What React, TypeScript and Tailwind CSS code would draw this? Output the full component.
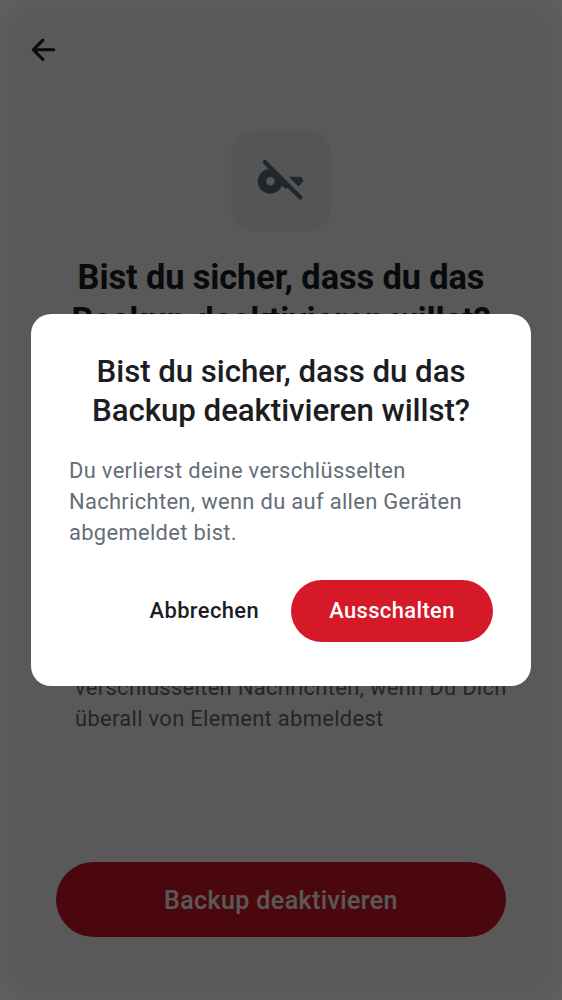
import React from "react";

function BackArrow() {
  return (
    <svg width="35" height="35" viewBox="0 0 24 24" fill="none" aria-hidden="true">
      <path
        d="M19 12.2H5M11.6 5.6 5 12.2l6.6 6.6"
        stroke="#1b1d22"
        strokeWidth="2.1"
        strokeLinecap="round"
        strokeLinejoin="round"
      />
    </svg>
  );
}

function KeyOffIcon() {
  return (
    <svg width="50" height="50" viewBox="0 0 50 50" aria-hidden="true">
      <path
        fillRule="evenodd"
        d="M15.5 12.8A12.5 12.5 0 1 0 26 29.6L29.2 32.8 31.2 32 33.2 33.4 36 33.4ZM10.2 25.2A4.2 4.2 0 1 1 18.6 25.2 4.2 4.2 0 1 1 10.2 25.2Z"
        fill="#656d77"
      />
      <path d="M32.6 20.8H44.2Q45 20.8 45.5 21.5L47 24.1Q47.5 25 46.9 25.8L42.4 30.6Z" fill="#656d77" />
      <path d="M8.8 6 44.4 41.6" stroke="#656d77" strokeWidth="4.2" strokeLinecap="round" />
    </svg>
  );
}

function Page() {
  return (
    <main className="flex h-full flex-col bg-white">
      <header className="flex h-[100px] items-center pb-px pl-[26px]">
        <button aria-label="Zurück">
          <BackArrow />
        </button>
      </header>
      <div className="mt-[31px] flex size-[100px] items-center justify-center self-center rounded-[22px] bg-[#f0f2f5]">
        <KeyOffIcon />
      </div>
      <h1 className="mt-[25px] text-center text-[34.4px] leading-[43px] font-bold tracking-[-0.11px] whitespace-nowrap text-[#1b1d22]">
        Bist du sicher, dass du das
        <br />
        Backup deaktivieren willst?
      </h1>
      <p className="mt-[330px] pl-[75px] text-[21.9px] leading-[31.25px] tracking-[0.33px] whitespace-nowrap text-[#656d77]">
        verschlüsselten Nachrichten, wenn Du Dich
        <br />
        überall von Element abmeldest
      </p>
      <button className="mx-14 mt-auto mb-[62.6px] h-[75px] shrink-0 rounded-full bg-[#d51928] pt-px text-[25px] font-medium tracking-[0.4px] text-white">
        Backup deaktivieren
      </button>
    </main>
  );
}

function ConfirmDialog() {
  return (
    <section
      role="dialog"
      className="flex h-[372px] w-[500px] flex-col rounded-[20px] bg-white px-[38px] pt-[38px]"
    >
      <h2 className="text-center text-[31.25px] leading-[39px] font-medium tracking-[-0.06px] whitespace-nowrap text-[#1b1d22]">
        Bist du sicher, dass du das
        <br />
        Backup deaktivieren willst?
      </h2>
      <p className="mt-[25px] text-[21.9px] leading-[31px] tracking-[0.33px] whitespace-nowrap text-[#656d77]">
        Du verlierst deine verschlüsselten
        <br />
        Nachrichten, wenn du auf allen Geräten
        <br />
        abgemeldet bist.
      </p>
      <div className="mt-8 flex justify-end gap-8 text-[21.9px] font-medium tracking-[0.4px]">
        <button className="text-[#1b1d22]">Abbrechen</button>
        <button className="h-[62px] w-[202px] rounded-full bg-[#d51928] text-white">Ausschalten</button>
      </div>
    </section>
  );
}

export default function App() {
  return (
    <div className="relative h-[1000px] w-[562px] overflow-hidden font-[Roboto,sans-serif]">
      <Page />
      <div className="absolute inset-0 flex items-center justify-center bg-black/65 shadow-[inset_0_0_36px_rgba(255,255,255,0.06)]">
        <ConfirmDialog />
      </div>
    </div>
  );
}
